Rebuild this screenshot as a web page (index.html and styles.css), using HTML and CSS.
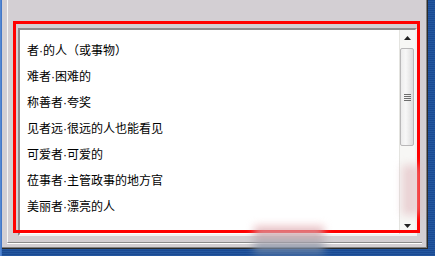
FILE: index.html
```html
<!DOCTYPE html>
<html>
<head>
<meta charset="utf-8">
<link rel="stylesheet" href="styles.css">
</head>
<body>
<div class="desk">
  <div class="win">
    <div class="group">
      <div class="listbox">
        <ul class="items">
          <li>者·的人（或事物）</li>
          <li>难者·困难的</li>
          <li>称善者·夸奖</li>
          <li>见者远·很远的人也能看见</li>
          <li>可爱者·可爱的</li>
          <li>莅事者·主管政事的地方官</li>
          <li>美丽者·漂亮的人</li>
        </ul>
        <div class="scrollbar">
          <div class="sbtn"><svg width="7" height="4" viewBox="0 0 7 4"><path d="M3.5 0L7 4H0z" fill="#222"/></svg></div>
          <div class="thumb"><span></span><span></span><span></span><span></span></div>
          <div class="track"></div>
          <div class="sbtn down"><svg width="7" height="4" viewBox="0 0 7 4"><path d="M0 0H7L3.5 4z" fill="#222"/></svg></div>
        </div>
      </div>
    </div>
    <div class="redmark"></div>
    <div class="smudge s1"></div>
    <div class="smudge s2"></div>
  </div>
</div>
</body>
</html>
```

FILE: styles.css
```css
html, body {
  margin: 0;
  padding: 0;
}
body {
  width: 435px;
  height: 256px;
  overflow: hidden;
  background: #1d4c95;
}
.desk {
  width: 435px;
  height: 256px;
  background:
    linear-gradient(to right, #5b8fd8 0, #3b6fc0 2px, transparent 2px),
    repeating-linear-gradient(to bottom, #1a4a93 0, #1a4a93 1px, #24579f 1px, #24579f 2px);
  display: flex;
}
.win {
  position: relative;
  margin-left: 2px;
  width: 426px;
  height: 249px;
  box-sizing: border-box;
  background: #d3cfd3;
  border-right: 1px solid #2a2a2a;
  border-bottom: 1px solid #2a2a2a;
  box-shadow: inset -1px -1px 0 #808080;
  display: flex;
  align-items: flex-start;
}
.group {
  margin-left: 5px;
  width: 415px;
  height: 243px;
  box-sizing: border-box;
  border-left: 1px solid #f6f6f6;
  border-bottom: 1px solid #8a8a8a;
  box-shadow: 0 1px 0 #ffffff;
  padding: 28px 0 0 10px;
}
.listbox {
  width: 399px;
  height: 208px;
  box-sizing: border-box;
  border-style: solid;
  border-width: 2px;
  border-color: #8d8a8d #f2f2f2 #f2f2f2 #8d8a8d;
  background: #ffffff;
  display: flex;
}
.items {
  flex: 1;
  list-style: none;
  margin: 0;
  padding: 8px 0 0 7px;
  font-family: "Liberation Sans", "Noto Sans CJK SC", "Noto Sans CJK JP", sans-serif;
  font-size: 12px;
  line-height: 26px;
  color: #000;
}
.scrollbar {
  width: 16px;
  background: #f7f7f5;
  border-left: 1px solid #e4e4e0;
  box-sizing: border-box;
  display: flex;
  flex-direction: column;
}
.sbtn {
  height: 16px;
  display: flex;
  align-items: center;
  justify-content: center;
}
.sbtn svg { display: block; }
.sbtn.down { align-items: flex-start; padding-top: 6px; box-sizing: border-box; }
.thumb {
  margin: 2px 1px 0 0;
  height: 98px;
  box-sizing: border-box;
  border: 1px solid #b9b8b9;
  border-radius: 2px;
  background: linear-gradient(to right, #ececec, #f7f7f7 40%, #dcdcdc);
  display: flex;
  flex-direction: column;
  align-items: center;
  justify-content: center;
  gap: 1px;
}
.thumb span {
  display: block;
  width: 7px;
  height: 1px;
  background: #6d6d6d;
}
.track { flex: 1; }
.redmark {
  position: absolute;
  left: 11px;
  top: 21px;
  width: 407px;
  height: 212px;
  box-sizing: border-box;
  border: 3px solid #ff0000;
}
.smudge {
  position: absolute;
  filter: blur(4px);
  pointer-events: none;
}
.s1 {
  left: 252px;
  top: 226px;
  width: 70px;
  height: 30px;
  background: linear-gradient(to bottom, rgba(240,170,175,0.75), rgba(170,170,175,0.7) 55%, rgba(70,110,160,0.7));
}
.s2 {
  left: 400px;
  top: 165px;
  width: 18px;
  height: 50px;
  background: rgba(225,185,190,0.6);
}
```
